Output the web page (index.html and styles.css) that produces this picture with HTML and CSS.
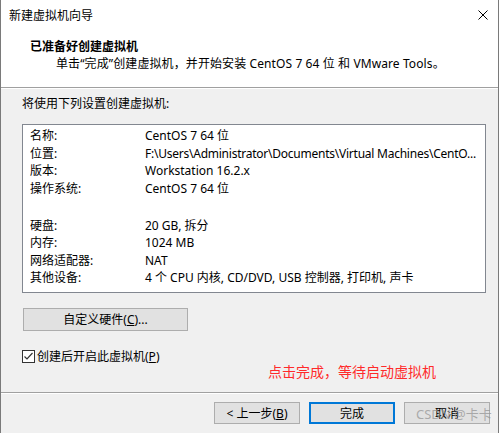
FILE: index.html
```html
<!DOCTYPE html>
<html lang="zh-CN">
<head>
<meta charset="utf-8">
<title>新建虚拟机向导</title>
<link rel="stylesheet" href="styles.css">
</head>
<body>
<div class="window">
  <div class="titlebar">
    <span class="title">新建虚拟机向导</span>
    <svg class="close" width="10" height="10" viewBox="0 0 10 10"><path d="M0.5 0.5L9.5 9.5M9.5 0.5L0.5 9.5" stroke="#000" stroke-width="1" fill="none"/></svg>
  </div>
  <div class="header">
    <div class="h-title">已准备好创建虚拟机</div>
    <div class="h-sub">单击“完成”创建虚拟机，并开始安装 CentOS 7 64 位 和 VMware Tools。</div>
  </div>
  <div class="sep"></div>
  <div class="body">
    <div class="lead">将使用下列设置创建虚拟机:</div>
    <div class="summary">
      <div class="row"><span class="k">名称:</span><span class="v">CentOS 7 64 位</span></div>
      <div class="row"><span class="k">位置:</span><span class="v path">F:\Users\Administrator\Documents\Virtual Machines\CentO...</span></div>
      <div class="row"><span class="k">版本:</span><span class="v">Workstation 16.2.x</span></div>
      <div class="row"><span class="k">操作系统:</span><span class="v">CentOS 7 64 位</span></div>
      <div class="row blank"></div>
      <div class="row"><span class="k">硬盘:</span><span class="v">20 GB, 拆分</span></div>
      <div class="row"><span class="k">内存:</span><span class="v">1024 MB</span></div>
      <div class="row"><span class="k">网络适配器:</span><span class="v">NAT</span></div>
      <div class="row"><span class="k">其他设备:</span><span class="v">4 个 CPU 内核, CD/DVD, USB 控制器, 打印机, 声卡</span></div>
    </div>
    <button class="btn custom">自定义硬件(<u>C</u>)...</button>
    <label class="check"><span class="box"><svg width="11" height="11" viewBox="0 0 11 11"><path d="M1.5 5.5L4 8L9.5 2" stroke="#333" stroke-width="1.2" fill="none"/></svg></span>创建后开启此虚拟机(<u>P</u>)</label>
    <div class="note">点击完成，等待启动虚拟机</div>
  </div>
  <div class="sep2"></div>
  <div class="footer">
    <button class="btn nav">&lt; 上一步(<u>B</u>)</button>
    <button class="btn nav primary">完成</button>
    <button class="btn nav cancel">取消<span class="wm">CSDN @卡卡</span></button>
  </div>
</div>
</body>
</html>
```
FILE: styles.css
```css
* { box-sizing: border-box; }
html, body { margin: 0; padding: 0; }
body {
  width: 499px;
  height: 433px;
  overflow: hidden;
  font-family: "Noto Sans", "Noto Sans CJK SC", sans-serif;
  font-size: 12px;
  color: #000;
  background: #f0f0f0;
}
.window {
  width: 499px;
  height: 433px;
  border-left: 1px solid #7a7a7a;
  border-right: 1px solid #7a7a7a;
  background: #f0f0f0;
}
.titlebar {
  height: 30px;
  background: #fff;
  display: flex;
  align-items: center;
  justify-content: space-between;
  padding: 0 10px 0 8px;
}
.title { line-height: 17px; }
.close { display: block; }
.header {
  background: #fff;
  height: 57px;
  padding: 8px 0 0 29px;
}
.h-title { font-weight: bold; line-height: 17px; font-size: 12px; }
.h-sub { line-height: 17px; margin-left: 26px; letter-spacing: 0.1px; }
.sep { height: 2px; border-top: 1px solid #a0a0a0; background: #fff; }
.body {
  height: 303px;
  padding: 5px 0 0 21px;
}
.lead { line-height: 17px; margin-top: 1px; }
.summary {
  margin-top: 12px;
  width: 464px;
  height: 169px;
  background: #fff;
  border: 1px solid #828790;
  padding: 2px 0 0 7px;
}
.row { display: flex; line-height: 17.5px; height: 17.5px; white-space: nowrap; }
.row.blank { height: 19.5px; }
.k { width: 115px; flex: none; }
.v { flex: none; }
.path { letter-spacing: -0.24px; }
.btn {
  font: inherit;
  color: #000;
  background: #e1e1e1;
  border: 1px solid #adadad;
  padding: 0;
  display: flex;
  align-items: center;
  justify-content: center;
  line-height: 17px;
}
.btn u { text-decoration: underline; text-underline-offset: 1px; }
.custom {
  margin: 15px 0 0 1px;
  width: 165px;
  height: 23px;
}
.check {
  display: flex;
  align-items: center;
  margin-top: 17px;
  line-height: 17px;
}
.box {
  width: 13px;
  height: 13px;
  border: 1px solid #333;
  background: #fff;
  margin-right: 2px;
  display: flex;
  align-items: center;
  justify-content: center;
}
.box svg { display: block; }
.note {
  margin: -2px 0 0 246px;
  color: #ff2a2a;
  font-size: 14px;
  line-height: 18px;
}
.sep2 { height: 2px; border-top: 1px solid #a0a0a0; background: #fff; }
.footer {
  display: flex;
  justify-content: flex-end;
  gap: 9px;
  padding: 8px 8px 0 0;
}
.nav { width: 86px; height: 22px; position: relative; }
.primary { border: 2px solid #0078d7; }
.wm {
  position: absolute;
  left: 11px;
  top: 3px;
  color: rgba(150,150,150,0.75);
  font-size: 13px;
  white-space: nowrap;
  line-height: 17px;
}
```
